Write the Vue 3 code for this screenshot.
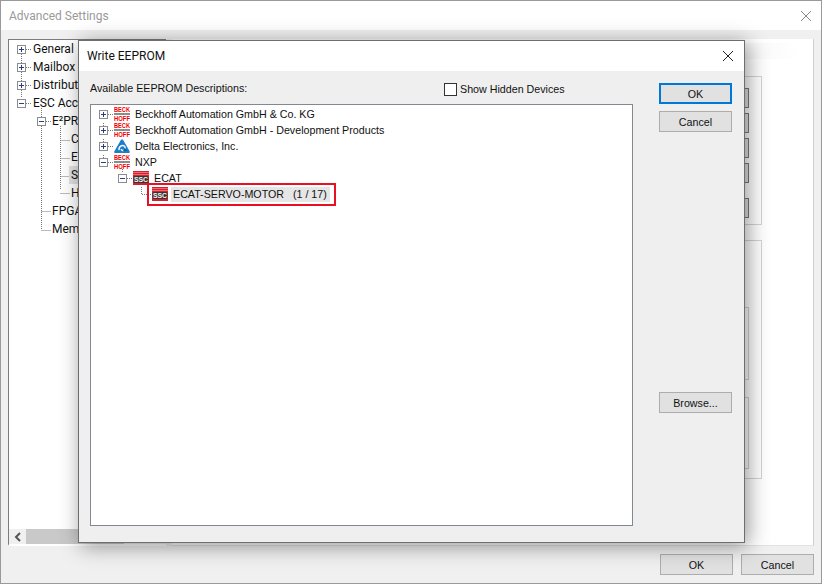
<script setup>
const sideRows = [
  { label: 'General', exp: 'plus', pad: 8, gap: 7 },
  { label: 'Mailbox', exp: 'plus', pad: 8, gap: 7 },
  { label: 'Distributed Clock', exp: 'plus', pad: 8, gap: 7 },
  { label: 'ESC Access', exp: 'minus', pad: 8, gap: 7 },
  { label: 'E²PROM', exp: 'minus', pad: 28, gap: 6 },
  { label: 'Configured', pad: 62 },
  { label: 'Extended', pad: 62 },
  { label: 'Smart View', pad: 62, selected: true },
  { label: 'Hex Editor', pad: 62 },
  { label: 'FPGA', pad: 43 },
  { label: 'Memory', pad: 43 }
]
const eepromRows = [
  { label: 'Beckhoff Automation GmbH & Co. KG', exp: 'plus', icon: 'beck', pad: 8 },
  { label: 'Beckhoff Automation GmbH - Development Products', exp: 'plus', icon: 'beck', pad: 8 },
  { label: 'Delta Electronics, Inc.', exp: 'plus', icon: 'delta', pad: 8 },
  { label: 'NXP', exp: 'minus', icon: 'beck', pad: 8 },
  { label: 'ECAT', exp: 'minus', icon: 'ssc', pad: 27 },
  { label: 'ECAT-SERVO-MOTOR   (1 / 17)', icon: 'ssc', pad: 61, selected: true }
]
</script>

<template>
  <div class="window">
    <header class="titlebar">
      <span class="title">Advanced Settings</span>
      <svg class="close faded" width="12" height="12" viewBox="0 0 12 12"><path d="M1 1l10 10M11 1L1 11" /></svg>
    </header>

    <div class="content">
      <aside class="side">
        <svg class="dots" width="160" height="240">
          <path d="M12.5 14v44M32.5 68v121M51.5 86v64M32.5 171.5h9M32.5 190.5h9M51.5 100.5h9M51.5 118.5h9M51.5 136.5h9M51.5 153.5h9M17 9.5h6M17 27.5h6M17 45.5h6M17 63.5h6M37 81.5h6" />
        </svg>
        <div class="side-tree">
          <div
            v-for="row in sideRows"
            :key="row.label"
            class="side-row"
            :style="{ paddingLeft: row.pad + 'px' }"
          >
            <span v-if="row.exp" class="exp" :class="row.exp" :style="{ marginRight: row.gap + 'px' }"></span>
            <span class="side-label" :class="{ 'side-selected': row.selected }">{{ row.label }}</span>
          </div>
        </div>
        <div class="scrollbar">
          <span class="arrow">
            <svg width="8" height="10" viewBox="0 0 8 10"><path d="M6 1L2 5l4 4" /></svg>
          </span>
          <span class="thumb"></span>
        </div>
      </aside>

      <main class="panel">
        <div class="tabstrip"></div>
        <section class="group group-top">
          <span class="mini"></span>
          <span class="mini"></span>
          <span class="mini"></span>
          <span class="mini"></span>
          <span class="mini mini-last"></span>
        </section>
        <section class="group group-bottom">
          <span class="inner inner-a"></span>
          <span class="inner inner-b"></span>
        </section>
      </main>
    </div>

    <footer class="footer">
      <button class="btn">OK</button>
      <button class="btn">Cancel</button>
    </footer>

    <div class="dialog">
      <header class="dialog-head">
        <span>Write EEPROM</span>
        <svg class="close" width="12" height="12" viewBox="0 0 12 12"><path d="M1 1l10 10M11 1L1 11" /></svg>
      </header>
      <div class="dialog-body">
        <div class="dialog-left">
          <div class="label-row">
            <span class="avail">Available EEPROM Descriptions:</span>
            <label class="check"><span class="box"></span>Show Hidden Devices</label>
          </div>
          <div class="tree">
            <svg class="dots" width="260" height="110">
              <path d="M12.5 18v3M12.5 34v3M12.5 50v3M17 9.5h6M17 25.5h6M17 41.5h6M17 57.5h6M31.5 64v4M36 73.5h6M50.5 82v7.5h10" />
            </svg>
            <div
              v-for="row in eepromRows"
              :key="row.label"
              class="tree-row"
              :style="{ paddingLeft: row.pad + 'px' }"
            >
              <span v-if="row.exp" class="exp" :class="row.exp"></span>

              <svg v-if="row.icon === 'beck'" class="icon" width="16" height="16" viewBox="0 0 16 16">
                <text x="0" y="6" class="beck" textLength="16" lengthAdjust="spacingAndGlyphs">BECK</text>
                <rect x="0" y="7" width="16" height="2" fill="#8c8c8c" />
                <text x="0" y="15" class="beck" textLength="16" lengthAdjust="spacingAndGlyphs">HOFF</text>
              </svg>

              <svg v-else-if="row.icon === 'delta'" class="icon" width="16" height="16" viewBox="0 0 16 16">
                <path d="M8 1.5C8.8 1.5 9.2 2 9.6 2.7L15.6 13.2C16.2 14.3 15.6 15 14.5 15H1.5C.4 15-.2 14.3.4 13.2L6.4 2.7C6.8 2 7.2 1.5 8 1.5Z" fill="#1b80c8" />
                <path d="M5 12.2C4.6 9.4 6.6 7.3 8.9 7.5 11 7.8 11.8 10 10.6 11.6 9.6 12.9 7.5 12.7 7.2 11.2" fill="none" stroke="#fff" stroke-width="1.5" />
                <path d="M9 13h4L10.8 9.4Z" fill="#0d5e9e" />
              </svg>

              <svg v-else class="icon" width="16" height="16" viewBox="0 0 16 16">
                <rect x="0" y="1" width="16" height="14" fill="#d3222f" />
                <path d="M0 2.5h16M0 4.5h16" stroke="#ee8f94" stroke-width=".7" />
                <rect x="0.5" y="6" width="15" height="7" rx="1.5" fill="#3a3232" />
                <text x="1" y="11.8" class="ssc" textLength="14" lengthAdjust="spacingAndGlyphs">SSC</text>
              </svg>

              <span class="tree-label" :class="{ 'tree-selected': row.selected }">{{ row.label }}</span>
            </div>
            <span class="highlight"></span>
          </div>
        </div>
        <div class="dialog-actions">
          <button class="btn btn-default">OK</button>
          <button class="btn">Cancel</button>
          <button class="btn btn-browse">Browse...</button>
        </div>
      </div>
    </div>
  </div>
</template>

<style>
html, body { margin: 0; padding: 0; overflow: hidden; background: #f0f0f0; }
</style>

<style scoped>
* { box-sizing: border-box; }
.window {
  position: relative;
  width: 822px;
  height: 584px;
  display: flex;
  flex-direction: column;
  background: #f0f0f0;
  border: 1px solid #9a9a9a;
  font: 12px/16px Roboto, "Liberation Sans", sans-serif;
  color: #111;
  overflow: hidden;
}
.titlebar {
  height: 29px;
  flex: none;
  background: #fff;
  display: flex;
  align-items: center;
  justify-content: space-between;
  padding: 0 9px 0 8px;
}
.title { color: #9a9a9a; }
.close path { stroke: #222; stroke-width: 1; fill: none; }
.close.faded path { stroke: #888; }
.content {
  flex: 1;
  min-height: 0;
  display: flex;
  gap: 6px;
  padding: 9px 7px 0;
}
.side {
  position: relative;
  width: 158px;
  display: flex;
  flex-direction: column;
  background: #fff;
  border-top: 1px solid #7c7c7c;
  border-left: 1px solid #7c7c7c;
  border-bottom: 2px solid #fff;
}
.dots {
  position: absolute;
  left: 0;
  top: 0;
  pointer-events: none;
}
.dots path {
  fill: none;
  stroke: #777;
  stroke-width: 1;
  stroke-dasharray: 1 1;
}
.side-tree { flex: 1; position: relative; overflow: hidden; width: 69px; }
.side-row {
  height: 18px;
  display: flex;
  align-items: center;
  white-space: nowrap;
  position: relative;
}
.side-selected { background: #e2e2e2; padding: 1px 2px; margin-left: -2px; }
.scrollbar { height: 15px; display: flex; background: #f0f0f0; flex: none; }
.arrow {
  width: 17px;
  display: flex;
  align-items: center;
  justify-content: center;
}
.arrow path { fill: none; stroke: #555; stroke-width: 2; }
.thumb { width: 98px; background: #c9c9c9; }
.panel {
  flex: 1;
  position: relative;
  background: #fff;
  border-right: 1px solid #cfcfcf;
  border-bottom: 1px solid #e2e2e2;
  padding: 37px 51px 0 8px;
  display: flex;
  flex-direction: column;
  gap: 15px;
}
.tabstrip {
  position: absolute;
  left: 0;
  right: 12px;
  top: 4px;
  height: 16px;
  background: linear-gradient(90deg, #f3f3f3 85%, #fff);
}
.group {
  border: 1px solid #d4d4d4;
  display: flex;
  flex-direction: column;
  align-items: flex-end;
  padding: 11px 12px 0 0;
  flex: none;
}
.group-top { height: 149px; gap: 5px; }
.group-bottom { height: 239px; padding-top: 66px; gap: 17px; }
.mini {
  width: 74px;
  height: 20px;
  background: #e1e1e1;
  border: 1px solid #7a7a7a;
}
.mini-last { margin-top: 10px; }
.inner { width: 200px; border: 1px solid #d0d0d0; flex: none; }
.inner-a { height: 73px; }
.inner-b { height: 72px; }
.footer {
  height: 37px;
  flex: none;
  display: flex;
  justify-content: flex-end;
  gap: 8px;
  padding: 8px 7px 0 0;
}
.btn {
  width: 73px;
  height: 21px;
  padding: 0;
  background: #e1e1e1;
  border: 1px solid #adadad;
  font: 10.7px/16px "Liberation Sans", Arial, sans-serif;
  color: #111;
}
.btn-default { border: 2px solid #0078d7; }
.btn-browse { margin-top: 253px; }
.dialog {
  position: absolute;
  left: 77px;
  top: 39px;
  width: 667px;
  height: 503px;
  background: #efefef;
  border: 1px solid #6e6e6e;
  box-shadow: 3px 3px 20px rgba(0, 0, 0, 0.42);
  display: flex;
  flex-direction: column;
}
.dialog-head {
  height: 30px;
  flex: none;
  background: #fff;
  display: flex;
  align-items: center;
  justify-content: space-between;
  padding: 0 10px 0 8px;
}
.dialog-body {
  flex: 1;
  min-height: 0;
  display: flex;
  padding: 12px 12px 16px 11px;
  gap: 26px;
  font: 10.7px/16px "Liberation Sans", Arial, sans-serif;
}
.dialog-left { width: 543px; display: flex; flex-direction: column; }
.label-row {
  height: 24px;
  display: flex;
  align-items: flex-start;
  margin-top: -3px;
}
.avail { width: 354px; flex: none; }
.check { display: flex; align-items: center; gap: 3px; padding-top: 1px; }
.box {
  width: 13px;
  height: 13px;
  border: 1px solid #333;
  background: #fff;
}
.tree {
  flex: 1;
  position: relative;
  background: #fff;
  border: 1px solid #828790;
  padding-top: 1px;
}
.tree-row {
  position: relative;
  height: 16px;
  display: flex;
  align-items: center;
  white-space: pre;
}
.exp {
  position: relative;
  flex: none;
  width: 9px;
  height: 9px;
  border: 1px solid #8c8c8c;
  background: #fff;
}
.exp::before {
  content: "";
  position: absolute;
  left: 1px;
  top: 3px;
  width: 5px;
  height: 1px;
  background: #24408f;
}
.exp.plus::after {
  content: "";
  position: absolute;
  left: 3px;
  top: 1px;
  width: 1px;
  height: 5px;
  background: #24408f;
}
.tree-row .exp { margin-right: 6px; }
.icon { flex: none; margin-right: 5px; }
.beck { font: bold 8px "Liberation Sans", sans-serif; fill: #f00000; }
.ssc { font: bold 6.5px "Liberation Sans", sans-serif; fill: #f6f6f6; }
.tree-selected {
  background: #e6e6e6;
  width: 159px;
  height: 15px;
  line-height: 15px;
  padding-left: 2px;
  margin-left: -2px;
}
.highlight {
  position: absolute;
  left: 56px;
  top: 78px;
  width: 189px;
  height: 23px;
  border: 2px solid #e81123;
  pointer-events: none;
}
.dialog-actions {
  width: 73px;
  display: flex;
  flex-direction: column;
  gap: 7px;
}
</style>
